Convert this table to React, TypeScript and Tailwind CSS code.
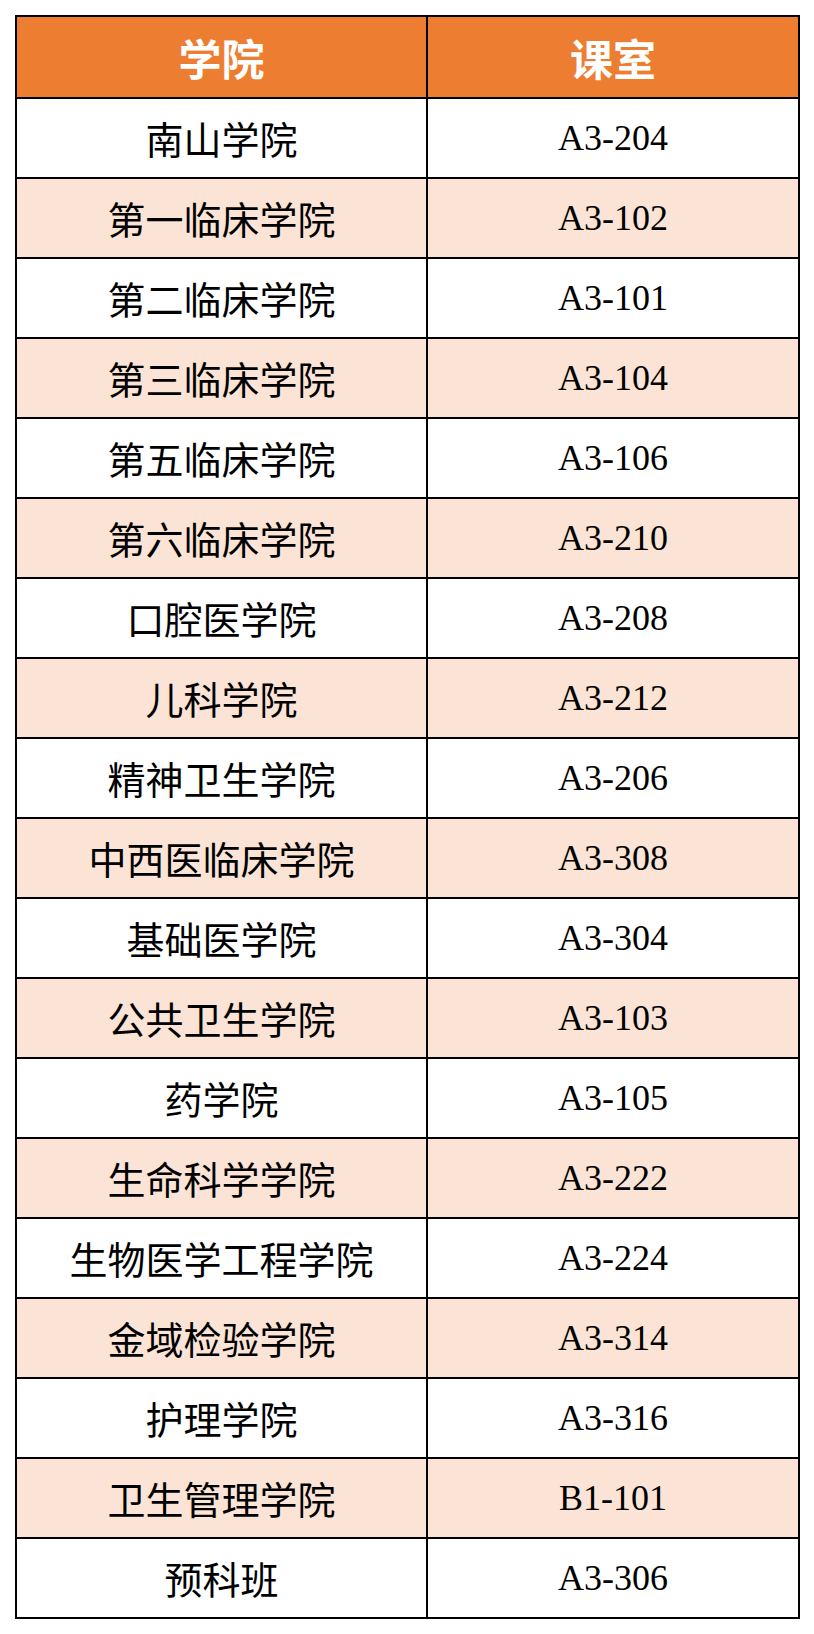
const rows: [string, string][] = [
  ['南山学院', 'A3-204'],
  ['第一临床学院', 'A3-102'],
  ['第二临床学院', 'A3-101'],
  ['第三临床学院', 'A3-104'],
  ['第五临床学院', 'A3-106'],
  ['第六临床学院', 'A3-210'],
  ['口腔医学院', 'A3-208'],
  ['儿科学院', 'A3-212'],
  ['精神卫生学院', 'A3-206'],
  ['中西医临床学院', 'A3-308'],
  ['基础医学院', 'A3-304'],
  ['公共卫生学院', 'A3-103'],
  ['药学院', 'A3-105'],
  ['生命科学学院', 'A3-222'],
  ['生物医学工程学院', 'A3-224'],
  ['金域检验学院', 'A3-314'],
  ['护理学院', 'A3-316'],
  ['卫生管理学院', 'B1-101'],
  ['预科班', 'A3-306'],
];

export default function App() {
  return (
    <div className="w-[814px] h-[1634px] bg-white pt-[15px] pl-[15px]">
      <table className="w-[785px] border-collapse border-2 border-black table-fixed">
        <colgroup>
          <col className="w-[411px]" />
          <col />
        </colgroup>
        <thead>
          <tr className="h-[82px] bg-[#ed7d31]">
            <th className="border-2 border-black text-white text-[43px] font-bold font-['Noto_Sans_CJK_SC',sans-serif] leading-none">
              学院
            </th>
            <th className="border-2 border-black text-white text-[43px] font-bold font-['Noto_Sans_CJK_SC',sans-serif] leading-none">
              课室
            </th>
          </tr>
        </thead>
        <tbody>
          {rows.map(([name, room], i) => (
            <tr key={name} className={i % 2 === 1 ? 'h-[80px] bg-[#fbe4d5]' : 'h-[80px] bg-white'}>
              <td className="border-2 border-black text-center text-black text-[38px] font-['Noto_Sans_CJK_SC',sans-serif] leading-none">
                {name}
              </td>
              <td className="border-2 border-black text-center text-black text-[36px] font-['Liberation_Serif',serif] leading-none">
                {room}
              </td>
            </tr>
          ))}
        </tbody>
      </table>
    </div>
  );
}
